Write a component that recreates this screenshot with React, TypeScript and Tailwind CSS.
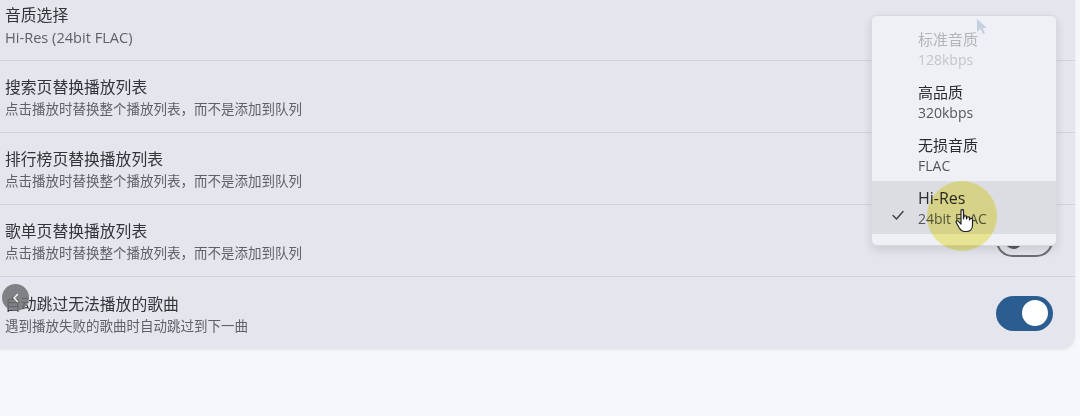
import React from "react";

const font = { fontFamily: '"Open Sans", "Noto Sans CJK SC", sans-serif' };

type Row = { title: string; sub: string; toggle: "none" | "off" | "on"; subSize?: string };

const rows: Row[] = [
  { title: "音质选择", sub: "Hi-Res (24bit FLAC)", toggle: "none", subSize: "text-[14.6px]" },
  { title: "搜索页替换播放列表", sub: "点击播放时替换整个播放列表，而不是添加到队列", toggle: "off" },
  { title: "排行榜页替换播放列表", sub: "点击播放时替换整个播放列表，而不是添加到队列", toggle: "off" },
  { title: "歌单页替换播放列表", sub: "点击播放时替换整个播放列表，而不是添加到队列", toggle: "off" },
  { title: "自动跳过无法播放的歌曲", sub: "遇到播放失败的歌曲时自动跳过到下一曲", toggle: "on" },
];

function Toggle({ on }: { on: boolean }) {
  if (on) {
    return (
      <div className="w-[57px] h-[35px] rounded-full bg-[#2c5d90] flex items-center justify-end pr-[5px]">
        <div className="w-[26px] h-[26px] rounded-full bg-white" />
      </div>
    );
  }
  return (
    <div className="w-[57px] h-[33px] rounded-full border-2 border-[#6d6e72] flex items-center pl-[7px]">
      <div className="w-[17px] h-[17px] rounded-full bg-[#5a5b5f]" />
    </div>
  );
}

const items = [
  { t: "标准音质", s: "128kbps", faded: true },
  { t: "高品质", s: "320kbps" },
  { t: "无损音质", s: "FLAC" },
  { t: "Hi-Res", s: "24bit FLAC", selected: true },
];

export default function App() {
  return (
    <div className="relative w-[1080px] h-[416px] overflow-hidden bg-[#f6f7fb]" style={font}>
      <div className="w-[1075px] -mt-[11px] bg-[#e5e6ed] rounded-br-[14px] shadow-[0_1px_3px_rgba(0,0,0,0.08)]">
        {rows.map((r, i) => (
          <div
            key={i}
            className={`flex items-center justify-between h-[72px] pl-[5px] pr-[22px] ${i < rows.length - 1 ? "border-b border-[#d2d3da]" : ""}`}
          >
            <div className="flex flex-col gap-[4px] pt-[2px]">
              <div className="text-[15.8px] leading-[20px] text-[#333438]">{r.title}</div>
              <div className={`${r.subSize ?? "text-[13.5px]"} leading-[17px] text-[#606166]`}>{r.sub}</div>
            </div>
            {r.toggle !== "none" && <Toggle on={r.toggle === "on"} />}
          </div>
        ))}
      </div>

      {/* dropdown menu */}
      <div className="absolute left-[871px] top-[15px] w-[186px] pt-[6px] pb-[11px] bg-[#eef0f5] rounded-[6px] border border-[#d8dae0] shadow-[0_4px_10px_rgba(0,0,0,0.12)]">
        {items.map((it, i) => (
          <div
            key={i}
            className={`flex items-center h-[53px] ${it.selected ? "bg-[#dcdde2]" : ""}`}
          >
            <div className="w-[46px] flex justify-center pl-[6px]">
              {it.selected && (
                <svg width="14" height="14" viewBox="0 0 14 14" className="mt-[14px]">
                  <path d="M2 7.5 L5.5 11 L12 3.5" fill="none" stroke="#3c3d42" strokeWidth="1.4" strokeLinecap="round" strokeLinejoin="round" />
                </svg>
              )}
            </div>
            <div className="flex flex-col gap-[2px]">
              <div className={`${it.selected ? "text-[16px] font-medium" : "text-[15px]"} leading-[20px] ${it.faded ? "text-[#b3b5bb]" : "text-[#2a2b2f]"}`}>{it.t}</div>
              <div className={`text-[14px] leading-[17px] ${it.faded ? "text-[#c3c5ca]" : "text-[#55565b]"}`}>{it.s}</div>
            </div>
          </div>
        ))}
      </div>

      {/* click highlight */}
      <div className="absolute left-[927px] top-[181px] w-[70px] h-[70px] rounded-full bg-[rgba(245,240,110,0.7)] mix-blend-multiply" />
      {/* hand cursor */}
      <svg className="absolute left-[954px] top-[208px]" width="22" height="26" viewBox="0 0 22 26">
        <path
          d="M7 2.5 C7 1.4 9.5 1.4 9.5 2.5 L9.5 11 L10 8.5 C10 7.5 12.5 7.5 12.5 8.5 L12.5 11 L13 9.5 C13 8.5 15.5 8.5 15.5 9.5 L15.5 12 L16 11 C16 10 18.5 10 18.5 11 L18.5 17 C18.5 21 16 23.5 12.5 23.5 L10.5 23.5 C8 23.5 6.5 22 5 19.5 L2.2 14.5 C1.6 13.4 3.2 12.2 4.2 13.2 L7 16 Z"
          fill="white"
          stroke="#222"
          strokeWidth="1.2"
          strokeLinejoin="round"
        />
      </svg>

      {/* top pointer cursor (faint) */}
      <svg className="absolute left-[976px] top-[18px] opacity-40" width="14" height="18" viewBox="0 0 14 18">
        <path d="M1 1 L1 14 L4.5 10.8 L7 16 L9 15 L6.6 10 L11 10 Z" fill="#8aa0c0" />
      </svg>

      {/* back button */}
      <div className="absolute left-[2px] top-[284px] w-[27px] h-[27px] rounded-full bg-[rgba(110,110,114,0.85)] flex items-center justify-center">
        <svg width="10" height="10" viewBox="0 0 10 10">
          <path d="M6.5 1.5 L3 5 L6.5 8.5" fill="none" stroke="white" strokeWidth="1.3" strokeLinecap="round" strokeLinejoin="round" />
        </svg>
      </div>
    </div>
  );
}
